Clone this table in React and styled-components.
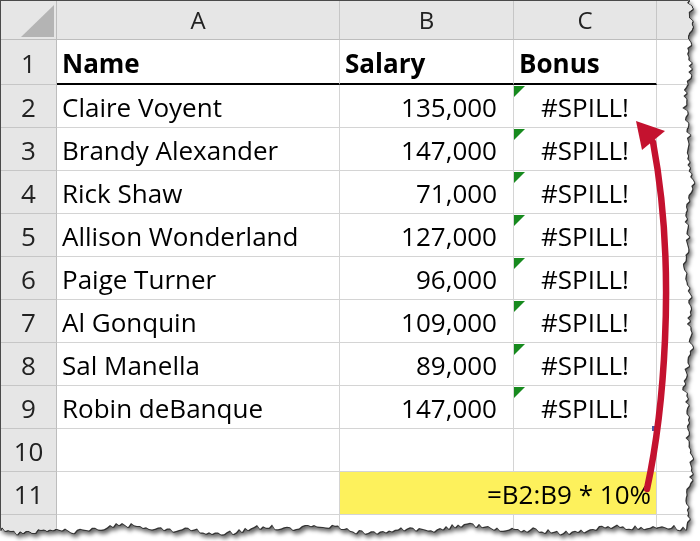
import React from "react";
import styled, { createGlobalStyle, css } from "styled-components";

const GlobalStyle = createGlobalStyle`
  html, body { margin: 0; padding: 0; background: #ffffff; }
  body { font-family: "Open Sans", "Liberation Sans", sans-serif; }
`;

function makeRng(seed) {
  let s = seed;
  return () => {
    s = (s * 16807) % 2147483647;
    return (s - 1) / 2147483646;
  };
}

function tornPolygon() {
  const r = makeRng(12345);
  const pts = ["0 0", "689px 0"];
  for (let y = 3; y < 528; y += 3) {
    const x = 688 + Math.sin(y / 23) * 2.6 + Math.sin(y / 9) * 1.6 + (r() - 0.5) * 5;
    pts.push(`${x.toFixed(1)}px ${y}px`);
  }
  pts.push("686px 530px");
  for (let x = 683; x > 0; x -= 3) {
    const y = 529 + Math.sin(x / 27) * 2.8 + Math.sin(x / 11) * 1.5 + (r() - 0.5) * 5;
    pts.push(`${x}px ${y.toFixed(1)}px`);
  }
  pts.push("0 530px");
  return `polygon(${pts.join(", ")})`;
}

const TORN = tornPolygon();

const Paper = styled.div`
  width: 700px;
  height: 541px;
  filter: drop-shadow(1px 0 0 #333) drop-shadow(0 1px 0 #333)
    drop-shadow(2px 3px 2px rgba(0, 0, 0, 0.6));
`;

const Sheet = styled.div`
  position: relative;
  width: 700px;
  height: 541px;
  box-sizing: border-box;
  background: #ffffff;
  border-top: 1px solid #4a4a4a;
  border-left: 1px solid #4a4a4a;
  overflow: hidden;
  clip-path: ${TORN};
`;

const Grid = styled.div`
  display: grid;
  grid-template-columns: 56px 283px 174px 143px 1fr;
  grid-template-rows: 39px 45px repeat(11, 43px);
  font-family: "Open Sans", "Liberation Sans", sans-serif;
  color: #000;
`;

const Corner = styled.div`
  background: #e6e6e6;
  border-right: 1px solid #bdbdbd;
  border-bottom: 1px solid #bdbdbd;
  box-sizing: border-box;
  display: flex;
  align-items: flex-end;
  justify-content: flex-end;
  padding: 0 2px 2px 0;
`;

const CornerTriangle = styled.div`
  width: 33px;
  height: 32px;
  background: #b4b4b4;
  clip-path: polygon(100% 0, 100% 100%, 0 100%);
`;

const ColHead = styled.div`
  background: #e6e6e6;
  border-right: 1px solid #c6c6c6;
  border-bottom: 1px solid #bdbdbd;
  box-sizing: border-box;
  display: flex;
  align-items: center;
  justify-content: center;
  font-size: 24px;
  color: #222;
  padding-bottom: 1px;
`;

const RowHead = styled.div`
  background: #e6e6e6;
  border-right: 1px solid #bdbdbd;
  border-bottom: 1px solid #c6c6c6;
  box-sizing: border-box;
  display: flex;
  align-items: center;
  justify-content: center;
  font-size: 26px;
  color: #222;
  padding-top: 2px;
  ${(p) => p.$cut && css`align-items: flex-start; padding-top: 10px;`}
`;

const Cell = styled.div`
  position: relative;
  box-sizing: border-box;
  border-right: 1px solid #d4d4d4;
  border-bottom: 1px solid #d4d4d4;
  display: flex;
  align-items: center;
  justify-content: ${(p) => p.$align || "flex-start"};
  padding: 2px ${(p) => p.$padR || 5}px 0 5px;
  font-size: 26px;
  font-weight: ${(p) => (p.$bold ? 700 : 400)};
  white-space: nowrap;
  ${(p) => p.$thick && css`border-bottom: 2px solid #000;`}
  ${(p) => p.$span && css`grid-column: span ${p.$span};`}
  ${(p) => p.$yellow && css`background: #fdf15c;`}
  ${(p) =>
    p.$flag &&
    css`
      &::before {
        content: "";
        position: absolute;
        left: 0;
        top: 1px;
        width: 11px;
        height: 11px;
        background: #178a1e;
        clip-path: polygon(0 0, 100% 0, 0 100%);
      }
    `}
  ${(p) =>
    p.$handle &&
    css`
      &::after {
        content: "";
        position: absolute;
        right: -4px;
        bottom: -3px;
        width: 8px;
        height: 5px;
        background: #4b5aa6;
      }
    `}
`;

const ArrowLayer = styled.svg`
  position: absolute;
  left: -1px;
  top: -1px;
  width: 700px;
  height: 541px;
  pointer-events: none;
`;

const people = [
  ["Claire Voyent", "135,000"],
  ["Brandy Alexander", "147,000"],
  ["Rick Shaw", "71,000"],
  ["Allison Wonderland", "127,000"],
  ["Paige Turner", "96,000"],
  ["Al Gonquin", "109,000"],
  ["Sal Manella", "89,000"],
  ["Robin deBanque", "147,000"],
];

export default function App() {
  return (
    <>
      <GlobalStyle />
      <Paper>
        <Sheet>
          <Grid>
            <Corner>
              <CornerTriangle />
            </Corner>
            <ColHead>A</ColHead>
            <ColHead>B</ColHead>
            <ColHead>C</ColHead>
            <ColHead />

            <RowHead>1</RowHead>
            <Cell $bold $thick>Name</Cell>
            <Cell $bold $thick>Salary</Cell>
            <Cell $bold $thick>Bonus</Cell>
            <Cell />

            {people.map(([name, salary], i) => (
              <React.Fragment key={name}>
                <RowHead>{i + 2}</RowHead>
                <Cell>{name}</Cell>
                <Cell $align="flex-end" $padR={16}>{salary}</Cell>
                <Cell $align="center" $flag $handle={i === people.length - 1}>
                  #SPILL!
                </Cell>
                <Cell />
              </React.Fragment>
            ))}

            <RowHead>10</RowHead>
            <Cell />
            <Cell />
            <Cell />
            <Cell />

            <RowHead>11</RowHead>
            <Cell />
            <Cell $span={2} $yellow $align="flex-end" $padR={5}>
              =B2:B9 * 10%
            </Cell>
            <Cell />

            <RowHead $cut>12</RowHead>
            <Cell />
            <Cell />
            <Cell />
            <Cell />
          </Grid>

          <ArrowLayer viewBox="0 0 700 541">
            <path
              d="M 647 489 C 662 420, 678 275, 653 142"
              fill="none"
              stroke="#c4122f"
              strokeWidth="6.5"
              strokeLinecap="round"
            />
            <polygon points="636,121 665,131 642,150" fill="#c4122f" />
          </ArrowLayer>
        </Sheet>
      </Paper>
    </>
  );
}
